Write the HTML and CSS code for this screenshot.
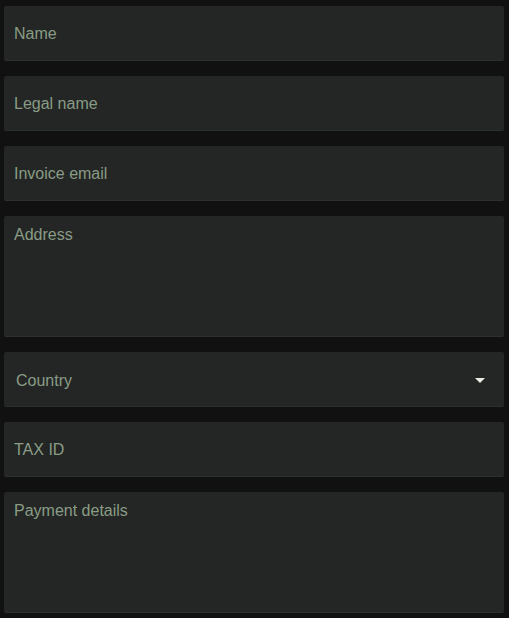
FILE: index.html
```html
<!DOCTYPE html>
<html lang="en">
<head>
<meta charset="utf-8">
<title>Billing details</title>
<link rel="stylesheet" href="styles.css">
</head>
<body>
<form class="form">
  <div class="field"><span class="placeholder">Name</span></div>
  <div class="field"><span class="placeholder">Legal name</span></div>
  <div class="field"><span class="placeholder">Invoice email</span></div>
  <div class="field field-area"><span class="placeholder">Address</span></div>
  <div class="field field-select">
    <span class="placeholder">Country</span>
    <svg class="caret" width="10" height="5" viewBox="0 0 10 5"><path d="M0 0H10L5 5Z" fill="#e6eee6"/></svg>
  </div>
  <div class="field"><span class="placeholder">TAX ID</span></div>
  <div class="field field-area"><span class="placeholder">Payment details</span></div>
</form>
</body>
</html>
```

FILE: styles.css
```css
html, body {
  margin: 0;
  background: #111111;
}
body {
  font-family: "Liberation Sans", Arial, sans-serif;
  font-size: 16px;
}
.form {
  display: flex;
  flex-direction: column;
  gap: 15px;
  padding: 6px 5px 6px 4px;
}
.field {
  box-sizing: border-box;
  height: 55px;
  background: #232624;
  border-radius: 2px;
  border-bottom: 1px solid #2b302c;
  display: flex;
  align-items: center;
  padding: 1px 10px 0;
}
.placeholder {
  color: #8a9c86;
}
.field-area {
  height: 121px;
  align-items: flex-start;
  padding-top: 10px;
}
.field-select {
  padding: 3px 19px 0 12px;
  justify-content: space-between;
}
.caret {
  display: block;
}
```
